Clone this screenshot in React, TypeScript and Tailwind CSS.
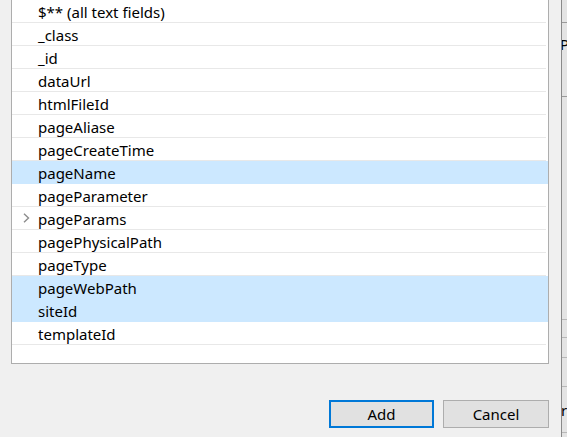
import React from "react";

const FIELDS = [
  { name: "$** (all text fields)" },
  { name: "_class" },
  { name: "_id" },
  { name: "dataUrl" },
  { name: "htmlFileId" },
  { name: "pageAliase" },
  { name: "pageCreateTime" },
  { name: "pageName", selected: true },
  { name: "pageParameter" },
  { name: "pageParams", expandable: true },
  { name: "pagePhysicalPath" },
  { name: "pageType" },
  { name: "pageWebPath", selected: true },
  { name: "siteId", selected: true },
  { name: "templateId" },
];

function Chevron() {
  return (
    <svg width="7" height="10" viewBox="0 0 7 10" className="ml-[11px]">
      <path d="M1 0.8 L5.5 5 L1 9.2" fill="none" stroke="#8c8c8c" strokeWidth="1.4" />
    </svg>
  );
}

export default function App() {
  return (
    <div
      className="w-[567px] h-[437px] bg-[#f0f0f0] flex overflow-hidden text-black"
      style={{ fontFamily: '"Noto Sans", "Liberation Sans", sans-serif' }}
    >
      {/* dialog */}
      <div className="w-[561px] shrink-0 flex flex-col">
        <div className="ml-[11px] w-[538px] h-[364px] bg-white border-x border-b border-[#adadad] flex flex-col">
          {FIELDS.map(f => (
            <div
              key={f.name}
              className={`h-[23px] flex items-center text-[15px] leading-[23px] border-b ${
                f.selected ? "bg-[#cce8ff] border-[#cce8ff]" : "border-[#e8e8e8] mr-[2px]"
              }`}
            >
              <div className="w-[26px] shrink-0 flex items-center">
                {f.expandable && <Chevron />}
              </div>
              <span className="pt-[2px]">{f.name}</span>
            </div>
          ))}
        </div>

        <div className="flex justify-end gap-[9px] pr-[12px] mt-[36px]">
          <button className="w-[105px] h-[28px] bg-[#e1e1e1] border-2 border-[#0078d7] text-[15px] leading-none">
            Add
          </button>
          <button className="w-[106px] h-[28px] bg-[#e1e1e1] border border-[#adadad] text-[15px] leading-none">
            Cancel
          </button>
        </div>
      </div>

      {/* window behind the dialog */}
      <div className="w-px shrink-0 h-full bg-[#8a8a8a]" />
      <div className="flex-1 min-w-0 overflow-hidden h-full bg-[#e4e4e4] flex flex-col text-[15px] leading-none">
        <div className="h-[23px] border-b border-[#9a9a9a]" />
        <div className="h-[74px] border-b border-[#9a9a9a] pt-[14px] -ml-[2px]">Pa</div>
        <div className="h-[223px] border-b border-[#b8b8b8]" />
        <div className="h-[18px] border-b border-[#b8b8b8]" />
        <div className="h-[20px] border-b border-[#b8b8b8]" />
        <div className="h-[29px] border-b border-[#b8b8b8]" />
        <div className="h-[46px] border-b border-[#b8b8b8] pt-[16px] -ml-[1px]">r</div>
      </div>
    </div>
  );
}
